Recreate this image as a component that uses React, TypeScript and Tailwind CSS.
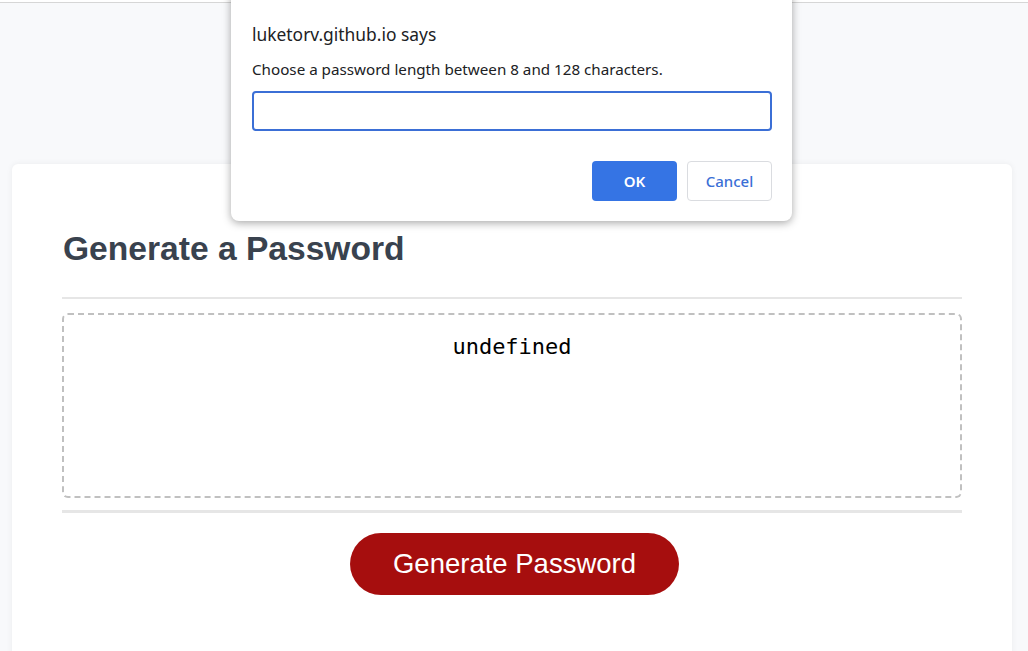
import React from "react";

const PromptDialog = () => {
  return (
    <div
      className="absolute left-[231px] top-[-8px] w-[561px] rounded-b-lg bg-white pb-[20px] pl-[21px] pr-[20px] pt-[31px] shadow-[0_2px_8px_rgba(0,0,0,0.35)]"
      style={{ fontFamily: '"Noto Sans", "Open Sans", sans-serif' }}
    >
      <div className="text-[17.4px] leading-[22px] text-[#202124]">luketorv.github.io says</div>
      <div className="mt-[15px] text-[15.2px] leading-[19px] text-[#202124]">
        Choose a password length between 8 and 128 characters.
      </div>
      <input
        className="mt-[12px] block h-[40px] w-[520px] rounded-[4px] border-2 border-[#3b6fd6] bg-white px-2 outline-none"
        defaultValue=""
      />
      <div className="mt-[30px] flex justify-end gap-[10px]">
        <button className="h-[40px] w-[85px] rounded-[4px] bg-[#3574e4] text-[15px] font-semibold text-white">
          OK
        </button>
        <button className="h-[40px] w-[85px] rounded-[4px] border border-[#dadce0] bg-white text-[15px] font-medium text-[#3b6fd6]">
          Cancel
        </button>
      </div>
    </div>
  );
};

const App = () => {
  return (
    <div className="relative h-[651px] overflow-hidden bg-[#f8f9fb]">
      <div className="h-[3px] border-b border-[#d6d6d6] bg-white" />
      <div
        className="mx-[12px] mt-[161px] w-[1000px] rounded-md bg-white px-[50px] pb-20 pt-[66px] shadow-[0_0_6px_rgba(0,0,0,0.06)]"
        style={{ fontFamily: '"Liberation Sans", Arial, sans-serif' }}
      >
        <h2 className="pl-[1px] text-[33.6px] font-bold leading-[38px] text-[#39424e]">Generate a Password</h2>
        <div className="mt-[29px] h-[2px] bg-[#e6e6e6]" />
        <div className="mt-[14px] h-[185px] rounded-[6px] border-2 border-dashed border-[#c0c0c0] pt-[19px] text-center">
          <span
            className="text-[22px] leading-[26px] text-black"
            style={{ fontFamily: '"DejaVu Sans Mono", "Liberation Mono", monospace' }}
          >
            undefined
          </span>
        </div>
        <div className="mt-[12px] h-[3px] bg-[#e6e6e6]" />
        <div className="mt-[20px] flex justify-center pl-[5px]">
          <button className="h-[62px] w-[329px] rounded-full bg-[#a60e0e] text-[27.5px] text-white">
            Generate Password
          </button>
        </div>
      </div>
      <PromptDialog />
    </div>
  );
};

export default App;
